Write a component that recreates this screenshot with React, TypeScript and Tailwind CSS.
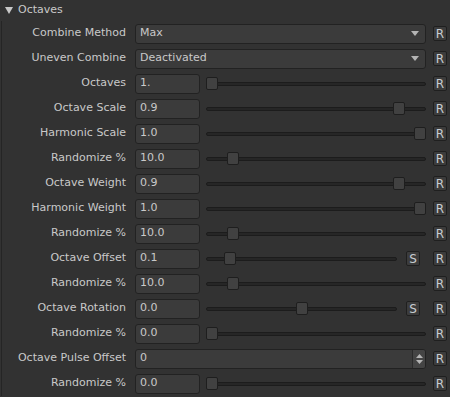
import React from "react";

type Row =
  | { kind: "select"; label: string; value: string }
  | { kind: "slider"; label: string; value: string; pos: number; s?: boolean }
  | { kind: "spin"; label: string; value: string };

const rows: Row[] = [
  { kind: "select", label: "Combine Method", value: "Max" },
  { kind: "select", label: "Uneven Combine", value: "Deactivated" },
  { kind: "slider", label: "Octaves", value: "1.", pos: 0 },
  { kind: "slider", label: "Octave Scale", value: "0.9", pos: 0.9 },
  { kind: "slider", label: "Harmonic Scale", value: "1.0", pos: 1 },
  { kind: "slider", label: "Randomize %", value: "10.0", pos: 0.1 },
  { kind: "slider", label: "Octave Weight", value: "0.9", pos: 0.9 },
  { kind: "slider", label: "Harmonic Weight", value: "1.0", pos: 1 },
  { kind: "slider", label: "Randomize %", value: "10.0", pos: 0.1 },
  { kind: "slider", label: "Octave Offset", value: "0.1", pos: 0.1, s: true },
  { kind: "slider", label: "Randomize %", value: "10.0", pos: 0.1 },
  { kind: "slider", label: "Octave Rotation", value: "0.0", pos: 0.5, s: true },
  { kind: "slider", label: "Randomize %", value: "0.0", pos: 0 },
  { kind: "spin", label: "Octave Pulse Offset", value: "0" },
  { kind: "slider", label: "Randomize %", value: "0.0", pos: 0 },
];

const SmallBtn = ({ children }: { children: string }) => (
  <div className="w-[14px] h-[15px] shrink-0 rounded-[2px] border border-[#1f1f1f] bg-[#3c3c3c] flex items-center justify-center text-[12px] leading-none text-[#c9cdd2]">
    {children}
  </div>
);

const Slider = ({ pos }: { pos: number }) => (
  <div className="relative flex-1 h-[13px] flex items-center">
    <div className="w-full h-[4px] rounded-[2px] bg-[#262626] border border-[#1c1c1c]" />
    <div
      className="absolute top-0 w-[12px] h-[13px] rounded-[2px] bg-[#414141] border border-[#1e1e1e]"
      style={{ left: `calc((100% - 12px) * ${pos})` }}
    />
  </div>
);

export default function App() {
  return (
    <div
      className="w-[450px] h-[397px] bg-[#323232] text-[11px] text-[#c9c9c9] overflow-hidden"
      style={{ fontFamily: '"DejaVu Sans", sans-serif' }}
    >
      <div className="h-[21px] flex items-center pl-[5px] gap-[5px]">
        <svg width="8" height="7" viewBox="0 0 8 7">
          <path d="M0 0 H8 L4 7 Z" fill="#c9c9c9" />
        </svg>
        <span>Octaves</span>
      </div>
      <div className="border-l border-[#252525] ml-[1px]">
        {rows.map((r, i) => (
          <div key={i} className="h-[25px] flex items-center pr-[4px]">
            <div className="w-[124px] text-right shrink-0">{r.label}</div>
            <div className="w-[9px] shrink-0" />
            {r.kind === "select" && (
              <div className="w-[291px] h-[20px] shrink-0 rounded-[3px] border border-[#222] bg-[#3b3b3b] flex items-center pl-[4px] pr-[6px]">
                <span className="flex-1">{r.value}</span>
                <svg width="8" height="5" viewBox="0 0 8 5">
                  <path d="M0 0 H8 L4 5 Z" fill="#b4b4b4" />
                </svg>
              </div>
            )}
            {r.kind === "spin" && (
              <div className="w-[291px] h-[20px] shrink-0 rounded-[3px] border border-[#222] bg-[#3b3b3b] flex items-center pl-[4px] overflow-hidden">
                <span className="flex-1">{r.value}</span>
                <div className="w-[13px] h-full bg-[#444] border-l border-[#2a2a2a] flex flex-col items-center justify-center gap-[2px]">
                  <svg width="7" height="4" viewBox="0 0 7 4">
                    <path d="M0 4 H7 L3.5 0 Z" fill="#b4b4b4" />
                  </svg>
                  <svg width="7" height="4" viewBox="0 0 7 4">
                    <path d="M0 0 H7 L3.5 4 Z" fill="#b4b4b4" />
                  </svg>
                </div>
              </div>
            )}
            {r.kind === "slider" && (
              <div className="w-[291px] shrink-0 flex items-center">
                <div className="w-[65px] h-[20px] shrink-0 rounded-[3px] border border-[#222] bg-[#3b3b3b] flex items-center pl-[4px]">
                  {r.value}
                </div>
                <div className="w-[6px] shrink-0" />
                <Slider pos={r.pos} />
                {r.s && (
                  <>
                    <div className="w-[9px] shrink-0" />
                    <SmallBtn>S</SmallBtn>
                    <div className="w-[6px] shrink-0" />
                  </>
                )}
              </div>
            )}
            <div className="w-[7px] shrink-0" />
            <SmallBtn>R</SmallBtn>
          </div>
        ))}
      </div>
    </div>
  );
}
